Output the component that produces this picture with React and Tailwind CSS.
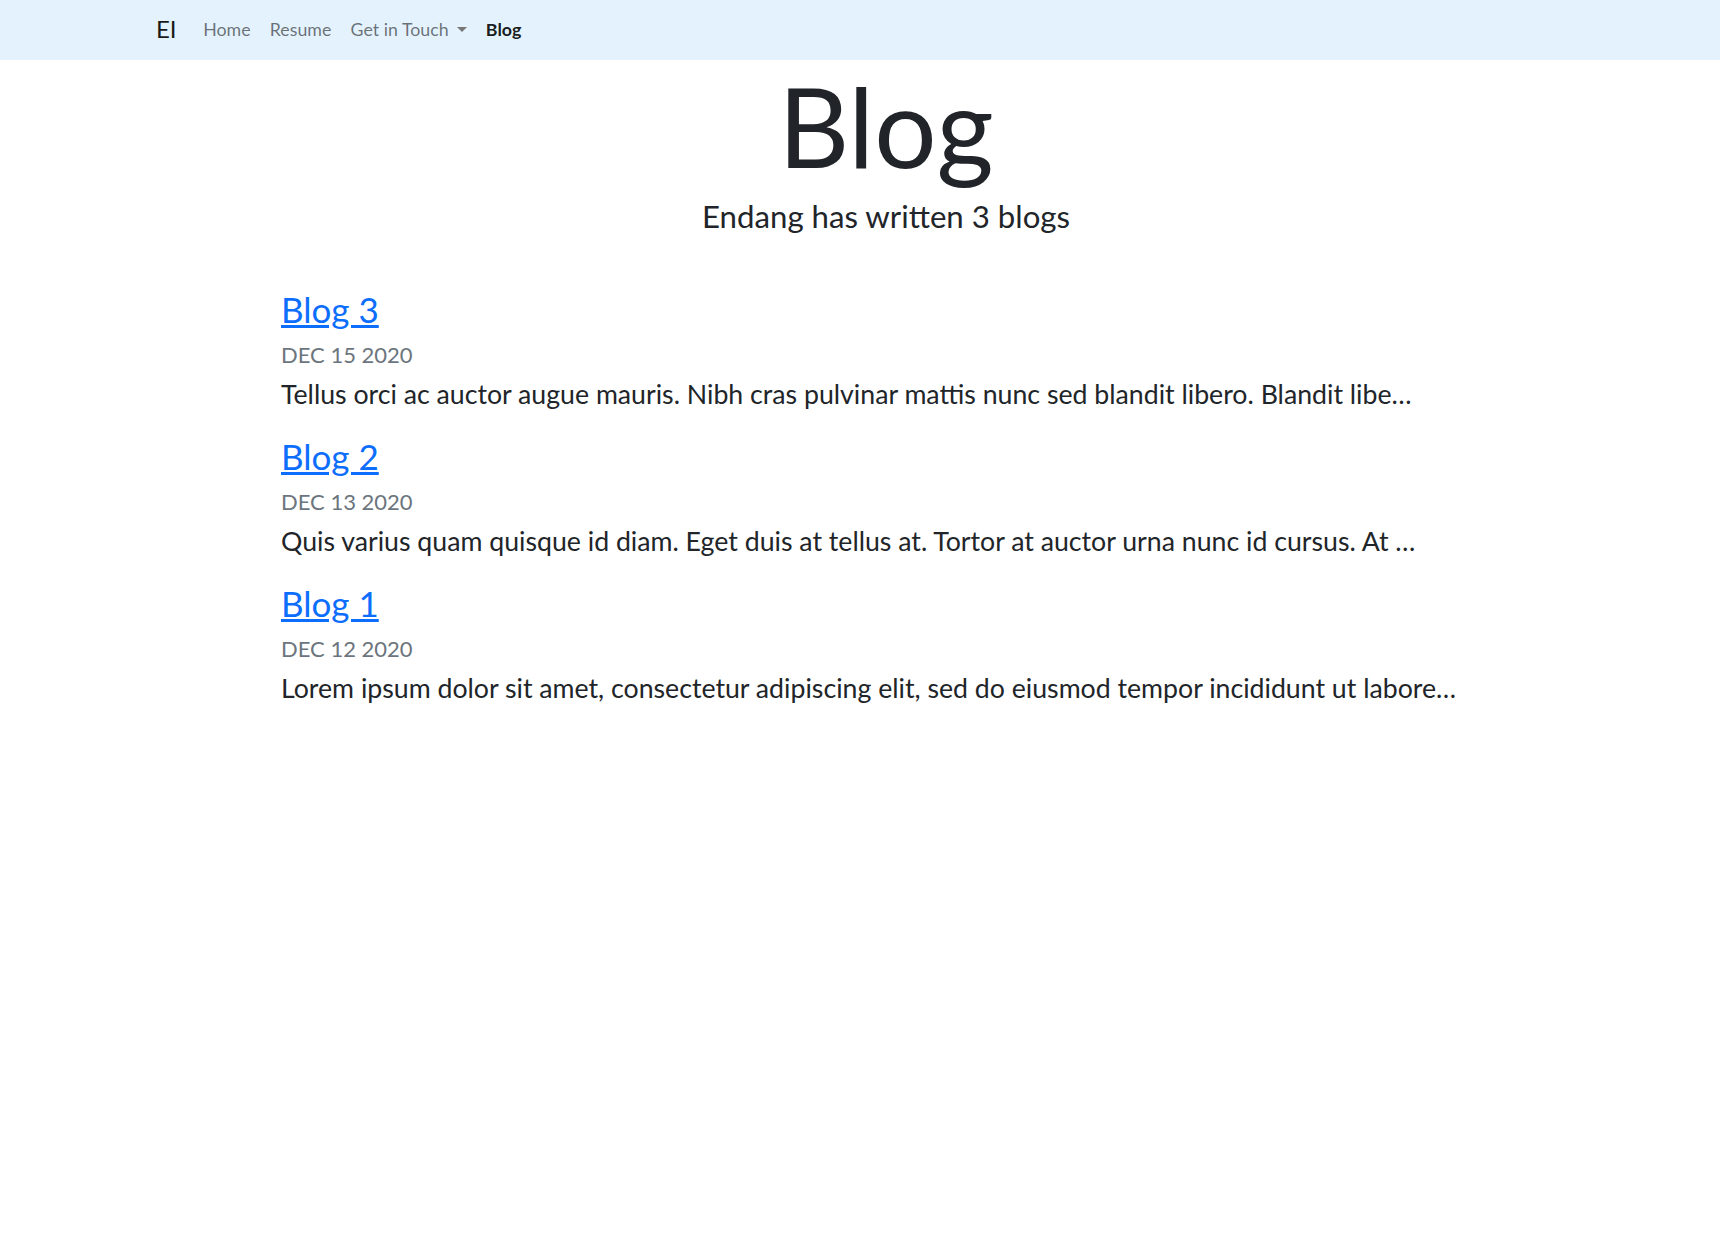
import React from 'react';

const posts = [
  {
    title: 'Blog 3',
    date: 'DEC 15 2020',
    excerpt: 'Tellus orci ac auctor augue mauris. Nibh cras pulvinar mattis nunc sed blandit libero. Blandit libe…',
  },
  {
    title: 'Blog 2',
    date: 'DEC 13 2020',
    excerpt: 'Quis varius quam quisque id diam. Eget duis at tellus at. Tortor at auctor urna nunc id cursus. At …',
  },
  {
    title: 'Blog 1',
    date: 'DEC 12 2020',
    excerpt: 'Lorem ipsum dolor sit amet, consectetur adipiscing elit, sed do eiusmod tempor incididunt ut labore…',
  },
];

const App = () => {
  return (
    <div className="min-h-screen bg-white font-['Lato',sans-serif] text-[#212529]">
      {/* Navbar */}
      <nav className="h-[60px] bg-[#e3f2fd] flex items-center pl-[156px] pb-[2px]">
        <a href="#" className="text-[24px] leading-[36px] text-[#1a1a1a] mr-[17px]">EI</a>
        <div className="flex items-center text-[17.8px] leading-[26px]">
          <a href="#" className="px-[9.6px] text-black/55">Home</a>
          <a href="#" className="px-[9.6px] text-black/55">Resume</a>
          <a href="#" className="px-[9.6px] text-black/55 flex items-center">
            Get in Touch
            <span className="ml-[8px] mt-[1px] w-0 h-0 border-t-[5px] border-t-[#777] border-x-[5.5px] border-x-transparent"></span>
          </a>
          <a href="#" className="px-[9.6px] font-bold text-black/90">Blog</a>
        </div>
      </nav>

      {/* Content */}
      <main className="ml-[281px] w-[1210px]">
        <div className="text-center">
          <h1 className="text-[110px] leading-[130px] font-normal">Blog</h1>
          <p className="text-[31.2px] leading-[48px] mt-[2px]">Endang has written 3 blogs</p>
        </div>

        <div className="mt-[50px]">
          {posts.map((post, index) => (
            <div key={index} className="mb-[23px]">
              <a href="#" className="block w-fit text-[35px] leading-[38px] text-[#0d6efd] underline mb-[11px]">
                {post.title}
              </a>
              <p className="text-[22px] leading-[32px] text-[#6c757d] mb-[3px]">{post.date}</p>
              <p className="text-[26.7px] leading-[40px] whitespace-nowrap">{post.excerpt}</p>
            </div>
          ))}
        </div>
      </main>
    </div>
  );
};

export default App;
